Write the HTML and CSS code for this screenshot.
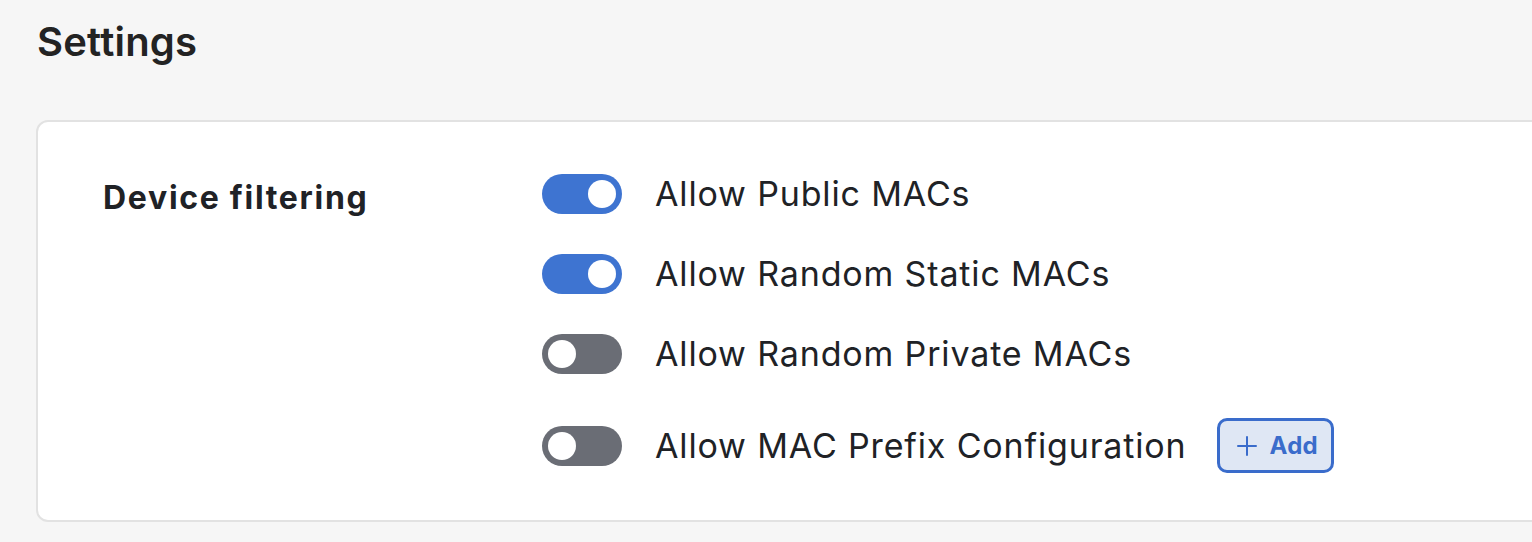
FILE: index.html
```html
<!DOCTYPE html>
<html lang="en">
<head>
<meta charset="utf-8">
<title>Settings</title>
<link rel="stylesheet" href="styles.css">
</head>
<body>
<div class="page">
  <h1 class="title">Settings</h1>
  <section class="card">
    <h2 class="section-title">Device filtering</h2>
    <div class="options">
      <div class="row">
        <span class="toggle on"><span class="knob"></span></span>
        <span class="label">Allow Public MACs</span>
      </div>
      <div class="row">
        <span class="toggle on"><span class="knob"></span></span>
        <span class="label">Allow Random Static MACs</span>
      </div>
      <div class="row">
        <span class="toggle"><span class="knob"></span></span>
        <span class="label">Allow Random Private MACs</span>
      </div>
      <div class="row last">
        <span class="toggle"><span class="knob"></span></span>
        <span class="label">Allow MAC Prefix Configuration</span>
        <button class="add-btn" type="button">
          <svg class="plus" width="20" height="20" viewBox="0 0 20 20" aria-hidden="true"><path d="M10 1v18M1 10h18" stroke="currentColor" stroke-width="2" stroke-linecap="round" fill="none"/></svg>
          <span>Add</span>
        </button>
      </div>
    </div>
  </section>
</div>
</body>
</html>
```

FILE: styles.css
```css
* { box-sizing: border-box; }
html, body {
  margin: 0;
  padding: 0;
  background: #f6f6f6;
  overflow: hidden;
}
body {
  font-family: Inter, "Noto Sans", "Liberation Sans", sans-serif;
  color: #202226;
  width: 1532px;
  height: 542px;
}
.page {
  padding: 16px 0 0 37px;
}
.title {
  margin: 0;
  font-size: 40px;
  font-weight: 600;
  line-height: 52px;
  letter-spacing: 0.2px;
  color: #232323;
}
.card {
  margin-top: 52px;
  margin-right: -40px;
  margin-left: -1px;
  background: #ffffff;
  border: 2px solid #e2e2e2;
  border-radius: 12px;
  display: flex;
  padding: 52px 0 47px 65px;
}
.section-title {
  margin: 0;
  width: 439px;
  font-size: 32px;
  font-weight: 700;
  line-height: 40px;
  letter-spacing: 1.7px;
  padding-top: 4px;
  color: #202226;
}
.options {
  display: flex;
  flex-direction: column;
  gap: 40px;
}
.row {
  display: flex;
  align-items: center;
  gap: 33px;
}
.row.last {
  margin-top: 4px;
}
.toggle {
  width: 80px;
  height: 40px;
  border-radius: 20px;
  background: #6a6d75;
  display: flex;
  align-items: center;
  padding: 0 6px;
  flex-shrink: 0;
}
.toggle.on {
  background: #3e74d1;
  justify-content: flex-end;
}
.knob {
  width: 28px;
  height: 28px;
  border-radius: 50%;
  background: #ffffff;
}
.label {
  font-size: 34px;
  line-height: 40px;
  font-weight: 400;
  letter-spacing: 0.85px;
  color: #202226;
}
.add-btn {
  display: flex;
  align-items: center;
  gap: 13px;
  height: 55px;
  margin-left: -3px;
  padding: 0 13px 0 17px;
  border: 3px solid #3a6ccb;
  border-radius: 10px;
  background: #dfe7f4;
  color: #3a6ccb;
  font-family: inherit;
  font-size: 24px;
  font-weight: 700;
  letter-spacing: 0.3px;
}
.plus {
  display: block;
}
```
